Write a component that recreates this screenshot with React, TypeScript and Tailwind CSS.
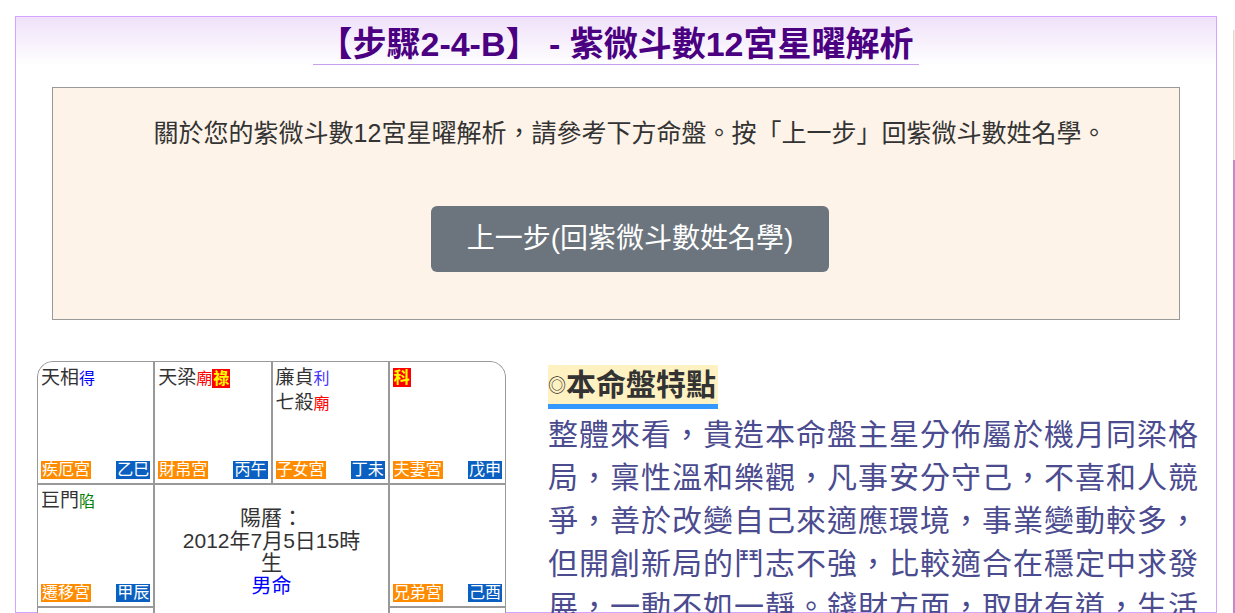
import React from "react";

type Mod = { t: string; c: string };
type Star = { name: string; mods?: Mod[] };
type Palace = { stars: Star[]; hua?: string; palace: string; gz: string };

const RED = "text-[#ff0000]";
const BLUE = "text-[#0000ff]";
const PURPLE = "text-[#4433ff]";
const GREEN = "text-[#008000]";

const palaces: Record<string, Palace> = {
  si: { stars: [{ name: "天相", mods: [{ t: "得", c: BLUE }] }], palace: "疾厄宮", gz: "乙巳" },
  wu: { stars: [{ name: "天梁", mods: [{ t: "廟", c: RED }] }], hua: "祿", palace: "財帛宮", gz: "丙午" },
  wei: {
    stars: [
      { name: "廉貞", mods: [{ t: "利", c: PURPLE }] },
      { name: "七殺", mods: [{ t: "廟", c: RED }] },
    ],
    palace: "子女宮",
    gz: "丁未",
  },
  shen: { stars: [], hua: "科", palace: "夫妻宮", gz: "戊申" },
  chen: { stars: [{ name: "巨門", mods: [{ t: "陷", c: GREEN }] }], palace: "遷移宮", gz: "甲辰" },
  you: { stars: [], palace: "兄弟宮", gz: "己酉" },
  mao: { stars: [{ name: "貪狼", mods: [{ t: "平", c: GREEN }] }], palace: "交友宮", gz: "癸卯" },
  xu: { stars: [{ name: "天同", mods: [{ t: "平", c: GREEN }] }], palace: "命宮", gz: "庚戌" },
  yin: { stars: [{ name: "天機", mods: [{ t: "得", c: BLUE }] }, { name: "太陰", mods: [{ t: "旺", c: RED }] }], palace: "官祿宮", gz: "壬寅" },
  chou: { stars: [{ name: "紫微", mods: [{ t: "廟", c: RED }] }, { name: "破軍", mods: [{ t: "旺", c: RED }] }], palace: "田宅宮", gz: "癸丑" },
  zi: { stars: [{ name: "太陽", mods: [{ t: "陷", c: GREEN }] }], palace: "福德宮", gz: "壬子" },
  hai: { stars: [{ name: "武曲", mods: [{ t: "平", c: GREEN }] }, { name: "天府", mods: [{ t: "旺", c: RED }] }], palace: "父母宮", gz: "辛亥" },
};

const Cell = ({ p }: { p: Palace }) => (
  <div className="bg-white h-[121px] flex flex-col justify-between pt-[4px] pb-[4px] px-[3px]">
    <div className="text-[19px] leading-[24px] text-[#333]">
      {p.stars.map((s, i) => (
        <div key={i} className="flex items-baseline">
          <span>{s.name}</span>
          {s.mods?.map((m, j) => (
            <span key={j} className={`text-[16px] ${m.c}`}>
              {m.t}
            </span>
          ))}
          {i === 0 && p.hua && (
            <span className="text-[16px] leading-[19px] bg-[#ff0000] text-[#ffff00] font-bold px-[1px]">{p.hua}</span>
          )}
        </div>
      ))}
      {p.stars.length === 0 && p.hua && (
        <div className="flex pt-[2px]">
          <span className="text-[16px] leading-[19px] bg-[#ff0000] text-[#ffff00] font-bold px-[1px]">{p.hua}</span>
        </div>
      )}
    </div>
    <div className="flex justify-between items-end text-[16px] leading-[18px] text-white">
      <span className="bg-[#ff8c00] px-[1px]">{p.palace}</span>
      <span className="bg-[#0a5fc0] px-[1px]">{p.gz}</span>
    </div>
  </div>
);

const Chart = () => (
  <div className="w-[469px] shrink-0 border border-[#999] rounded-t-[16px] overflow-hidden bg-[#999]">
    <div className="grid grid-cols-4 gap-[2px]">
      <Cell p={palaces.si} />
      <Cell p={palaces.wu} />
      <Cell p={palaces.wei} />
      <Cell p={palaces.shen} />
      <Cell p={palaces.chen} />
      <div className="col-span-2 row-span-2 bg-white text-center text-[21px] leading-[22.5px] text-[#333] pt-[22px]">
        <div>陽曆：</div>
        <div>2012年7月5日15時</div>
        <div>生</div>
        <div className="text-[#0000ff] text-[20px]">男命</div>
      </div>
      <Cell p={palaces.you} />
      <Cell p={palaces.mao} />
      <Cell p={palaces.xu} />
      <Cell p={palaces.yin} />
      <Cell p={palaces.chou} />
      <Cell p={palaces.zi} />
      <Cell p={palaces.hai} />
    </div>
  </div>
);

export default function App() {
  return (
    <div
      className="w-[1235px] h-[613px] overflow-hidden flex bg-white"
      style={{ fontFamily: '"Liberation Sans", "Noto Sans CJK TC", sans-serif' }}
    >
      <div className="ml-[15px] mt-[16px] w-[1202px] shrink-0 border border-[#d4a5ff] bg-[linear-gradient(to_bottom,#efe1f9_0px,#ffffff_48px)]">
        <div className="text-center pt-[7px]">
          <h1 className="inline-block px-[5px] border-b border-[#c89ef0] text-[34px] leading-[40px] font-bold text-[#4b0082]">
            【步驟2-4-B】 - 紫微斗數12宮星曜解析
          </h1>
        </div>

        <div className="w-[94%] mx-auto mt-[22px] border border-[#999] bg-[#fef3e9] pt-[27px] pb-[47px] pl-[28px] text-center">
          <p className="text-[25px] leading-[37px] text-[#333]">
            關於您的紫微斗數12宮星曜解析，請參考下方命盤。按「上一步」回紫微斗數姓名學。
          </p>
          <button className="mt-[54px] h-[66px] px-[36px] rounded-[6px] bg-[#6c757d] text-white text-[28px] leading-[66px]">
            上一步(回紫微斗數姓名學)
          </button>
        </div>

        <div className="flex mt-[41px] pl-[21px] pr-[18px] gap-[42px]">
          <Chart />
          <div className="flex-1 pt-[4px]">
            <h2 className="inline-block bg-[#fff2c2] border-b-[5px] border-[#3399ff] text-[#333] font-bold text-[30px] leading-[39px] h-[44px] pr-[2px]">
              <span className="text-[18px] leading-none font-normal align-[3px]">◎</span>本命盤特點
            </h2>
            <p className="mt-[4px] text-[30px] leading-[43px] text-[#4b4b8f] text-justify">
              整體來看，貴造本命盤主星分佈屬於機月同梁格局，稟性溫和樂觀，凡事安分守己，不喜和人競爭，善於改變自己來適應環境，事業變動較多，但開創新局的鬥志不強，比較適合在穩定中求發展，一動不如一靜。錢財方面，取財有道，生活節儉，不喜浪費，適合以穩定的薪資收入累積財富。
            </p>
          </div>
        </div>
      </div>
      <div className="ml-[16px] mt-[30px] w-[200px] shrink-0 flex flex-col">
        <div className="h-[130px] bg-[#f3ece4] border-l border-[#e2dad2]"></div>
        <div className="flex-1 bg-[#c887c8]"></div>
      </div>
    </div>
  );
}
